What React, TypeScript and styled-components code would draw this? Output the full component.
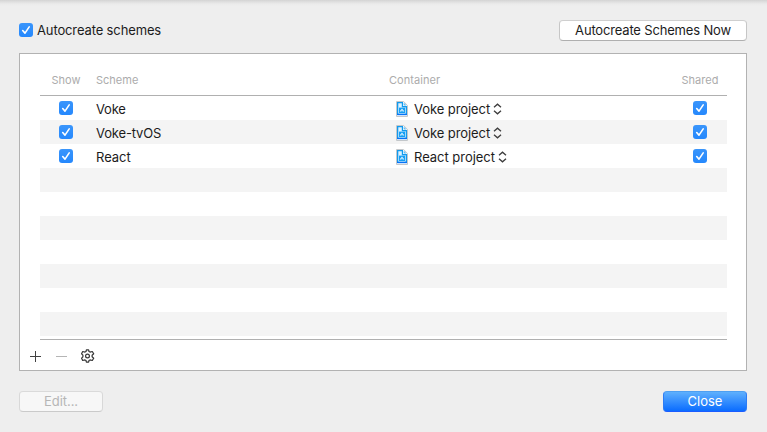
import React from "react";
import styled, { createGlobalStyle } from "styled-components";

const GlobalStyle = createGlobalStyle`
  *, *::before, *::after { box-sizing: border-box; }
  body {
    margin: 0;
    background: #eeeeee;
    font-family: Inter, "Liberation Sans", sans-serif;
    font-size: 13px;
    color: #1c1c1c;
  }
`;

const Sheet = styled.main`
  display: flex;
  flex-direction: column;
  width: 767px;
  height: 432px;
  padding: 20px 20px 0 19px;
  background: linear-gradient(#d3d3d3, #e0e0e0 2px, #ebebeb 4px, #eeeeee 6px);
`;

const TopBar = styled.header`
  display: flex;
  justify-content: space-between;
  align-items: flex-start;
  height: 33px;
`;

const CheckLabel = styled.label`
  display: flex;
  align-items: center;
  gap: 4px;
  height: 20px;
`;

const Text = styled.span<{ $spacing?: number }>`
  line-height: 20px;
  white-space: nowrap;
  letter-spacing: ${(p) => p.$spacing ?? 0}px;
`;

const Box = styled.span`
  display: block;
  width: 14px;
  height: 14px;
  border-radius: 3px;
  background: linear-gradient(#3a95fb, #2588fd);
  svg { display: block; }
`;

const Button = styled.button<{ $kind?: "primary" | "disabled"; $width: number; $spacing?: number }>`
  width: ${(p) => p.$width}px;
  height: 21px;
  padding: 0;
  border: 1px solid;
  border-color: ${(p) =>
    p.$kind === "primary"
      ? "#4d9ff2 #2c7cf5 #1a5cff"
      : p.$kind === "disabled"
        ? "#dadada #d8d8d8 #cacaca"
        : "#cfcfcf #c6c6c6 #afafaf"};
  border-radius: 4px;
  background: ${(p) =>
    p.$kind === "primary"
      ? "linear-gradient(#5fb0fd, #0a6cff)"
      : p.$kind === "disabled"
        ? "#f7f7f7"
        : "#ffffff"};
  color: ${(p) => (p.$kind === "primary" ? "#ffffff" : p.$kind === "disabled" ? "#b6b6b6" : "#1c1c1c")};
  font: 13px/19px Inter, "Liberation Sans", sans-serif;
  letter-spacing: ${(p) => p.$spacing ?? 0}px;
`;

const Panel = styled.section`
  display: flex;
  flex-direction: column;
  height: 318px;
  padding: 0 19px 0 20px;
  border: 1px solid #b2b2b2;
  background: #ffffff;
`;

const Row = styled.div<{ $striped?: boolean }>`
  display: grid;
  grid-template-columns: 52px 297px 284px 54px;
  align-items: center;
  flex: none;
  height: 24px;
  background: ${(p) => (p.$striped ? "#f4f4f4" : "#ffffff")};
`;

const HeaderRow = styled(Row)`
  height: 42px;
  padding-top: 10px;
  border-bottom: 1px solid #b0b0b0;
  color: #acacac;
  font-size: 11px;
`;

const Cell = styled.div<{ $center?: boolean; $left?: number }>`
  display: flex;
  justify-content: ${(p) => (p.$center ? "center" : "flex-start")};
  padding-left: ${(p) => p.$left ?? 0}px;
  align-items: center;
  height: 24px;
`;

const NameCell = styled(Cell)`
  padding-top: 2px;
`;

const ProjectText = styled(Text)`
  margin: 0 3px 0 6px;
`;

const Body = styled.div`
  height: 244px;
  flex: none;
  border-bottom: 1px solid #b0b0b0;
`;

const Tools = styled.div`
  display: flex;
  align-items: center;
  gap: 14px;
  height: 33px;
  padding-top: 2px;
  margin-left: -10px;
  svg { display: block; }
`;

const Footer = styled.footer`
  display: flex;
  justify-content: space-between;
  margin-top: 20px;
`;

const Checkbox = () => (
  <Box role="checkbox" aria-checked="true">
    <svg width="14" height="14" viewBox="0 0 14 14" fill="none" stroke="#fff" strokeWidth="1.6" strokeLinecap="round" strokeLinejoin="round">
      <path d="M3.7 7.5 6 10.1 10.2 3.9" />
    </svg>
  </Box>
);

const ProjectIcon = () => (
  <svg width="12" height="16" viewBox="0 0 12 16" fill="none">
    <path d="M.5.5H7.6L11.5 4.4V15.5H.5Z" fill="#ffffff" stroke="#c3c7ca" />
    <path d="M1 1H7V5H11V14H1Z" fill="#129aee" />
    <path d="M2.3 2.3H5.8V6.2H9.7V12.7H2.3Z" fill="#dff3ff" />
    <path d="M7.6 1.6 10.6 4.6H7.6Z" fill="#62bff5" />
    <path d="M3 6.6H9V12H3Z" fill="#159ff5" />
    <path d="M4.3 10.6 6 7.9 7.7 10.6M4.3 9.8H7.7" stroke="#e8f7ff" strokeWidth=".8" />
    <path d="M1 13.5H11" stroke="#0873f5" strokeWidth="1.4" />
  </svg>
);

const Chevrons = () => (
  <svg width="9" height="12" viewBox="0 0 9 12" fill="none" stroke="#3c3c3c" strokeWidth="1.3">
    <path d="M1 4.2 4.5 1.2 8 4.2M1 7.8 4.5 10.8 8 7.8" />
  </svg>
);

const PlusIcon = () => (
  <svg width="11" height="11" viewBox="0 0 11 11" stroke="#414141">
    <path d="M0 5.5H11M5.5 0V11" />
  </svg>
);

const MinusIcon = () => (
  <svg width="12" height="11" viewBox="0 0 12 11" stroke="#b5b5b5">
    <path d="M1 5.5H12" />
  </svg>
);

const GearIcon = () => (
  <svg width="14" height="14" viewBox="0 0 14 14" fill="none" stroke="#353535" strokeWidth="1.2" strokeLinejoin="round">
    <g transform="translate(-.5 0)">
      <path d="M5.5 2.5 5.9.8H8.1L8.5 2.5 9.5 3.1 11.8 2.5 13.2 4.8 11.6 6.2V7.8L13.2 9.2 11.8 11.5 9.5 10.9 8.5 11.5 8.1 13.2H5.9L5.5 11.5 4.5 10.9 2.2 11.5 1.1 9.2 2.4 7.8V6.2L1.1 4.8 2.2 2.5 4.5 3.1Z" />
      <circle cx="7" cy="7" r="1.9" />
    </g>
  </svg>
);

type Scheme = { name: string; project: string; nameSpacing: number; projectSpacing: number };

const schemes: Scheme[] = [
  { name: "Voke", project: "Voke project", nameSpacing: -0.2, projectSpacing: -0.08 },
  { name: "Voke-tvOS", project: "Voke project", nameSpacing: -0.15, projectSpacing: -0.08 },
  { name: "React", project: "React project", nameSpacing: -0.05, projectSpacing: -0.03 },
];

const ROW_COUNT = 10;

export default function App() {
  return (
    <>
      <GlobalStyle />
      <Sheet>
        <TopBar>
          <CheckLabel>
            <Checkbox />
            <Text $spacing={-0.13}>Autocreate schemes</Text>
          </CheckLabel>
          <Button $width={188} $spacing={-0.17}>Autocreate Schemes Now</Button>
        </TopBar>
        <Panel>
          <HeaderRow>
            <Cell $center><Text>Show</Text></Cell>
            <Cell $left={4}><Text>Scheme</Text></Cell>
            <Cell><Text $spacing={0.05}>Container</Text></Cell>
            <Cell $center><Text>Shared</Text></Cell>
          </HeaderRow>
          <Body>
            {Array.from({ length: ROW_COUNT }, (_, i) => {
              const s = schemes[i];
              return (
                <Row key={i} $striped={i % 2 === 1}>
                  {s && (
                    <>
                      <Cell $center><Checkbox /></Cell>
                      <NameCell $left={4}><Text $spacing={s.nameSpacing}>{s.name}</Text></NameCell>
                      <NameCell $left={7}>
                        <ProjectIcon />
                        <ProjectText $spacing={s.projectSpacing}>{s.project}</ProjectText>
                        <Chevrons />
                      </NameCell>
                      <Cell $center><Checkbox /></Cell>
                    </>
                  )}
                </Row>
              );
            })}
          </Body>
          <Tools>
            <PlusIcon />
            <MinusIcon />
            <GearIcon />
          </Tools>
        </Panel>
        <Footer>
          <Button $width={84} $kind="disabled" $spacing={-0.05} disabled>Edit...</Button>
          <Button $width={84} $kind="primary">Close</Button>
        </Footer>
      </Sheet>
    </>
  );
}
